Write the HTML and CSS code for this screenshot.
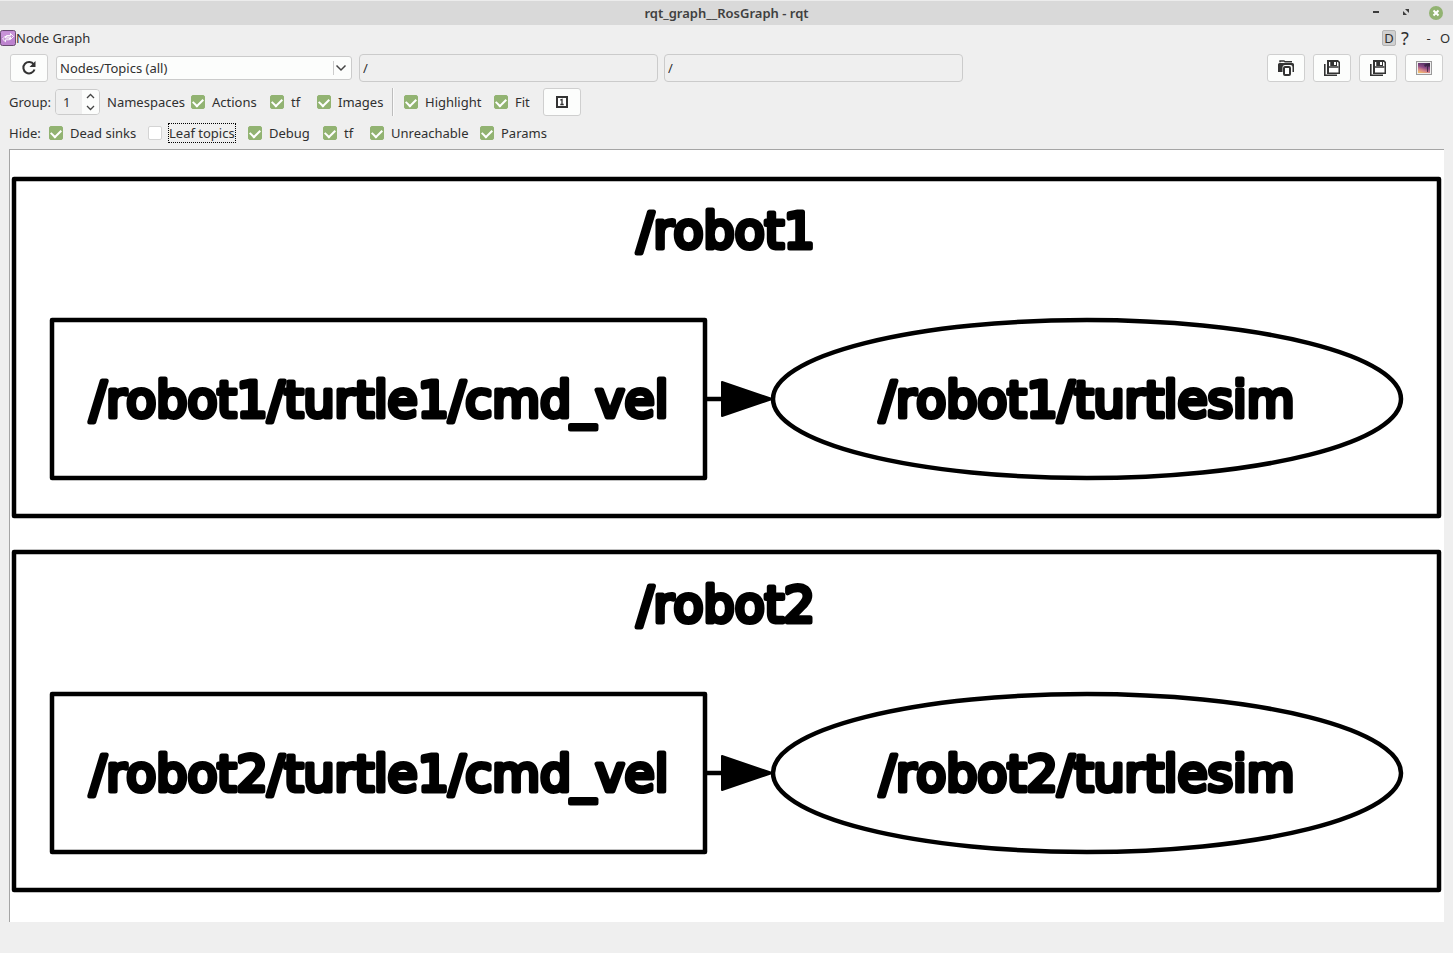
FILE: index.html
```html
<!DOCTYPE html>
<html lang="en">
<head>
<meta charset="utf-8">
<title>rqt_graph__RosGraph - rqt</title>
<link rel="stylesheet" href="styles.css">
</head>
<body>
<header class="titlebar">
  <h1 class="window-title">rqt_graph__RosGraph - rqt</h1>
  <div class="window-buttons">
    <button class="bare" aria-label="Minimize"><svg width="14" height="14" viewBox="0 0 14 14"><path d="M4 6h6" stroke="#3c3c3c" stroke-width="2"/></svg></button>
    <button class="bare" aria-label="Maximize"><svg width="14" height="14" viewBox="0 0 14 14"><path d="M6 3h4v4zM4 5l4 4H4z" fill="#3c3c3c"/></svg></button>
    <button class="bare" aria-label="Close"><svg width="14" height="14" viewBox="0 0 14 14"><circle cx="7" cy="7" r="7" fill="#92b372"/><path d="M4.500 4.500l5 5M9.500 4.500l-5 5" stroke="#fff" stroke-width="2"/></svg></button>
  </div>
</header>

<section class="dock-title">
  <svg width="16" height="16" viewBox="0 0 16 16"><rect x=".5" y=".5" width="15" height="15" rx="2" fill="#bd83cf" stroke="#674a70"/><path d="M1 1.500h14V7H1z" fill="#cf9fdd" opacity=".6"/><path d="M2.500 9l3-3v2h4v1.800h-4v2zM13.500 6.500l-3-3v2h-4v1.500h4v2.500z" fill="#c794d6" stroke="#fff" stroke-width=".9"/></svg>
  <h2 class="dock-name">Node Graph</h2>
  <div class="dock-buttons">
    <button class="bare dock-d">D</button>
    <button class="bare dock-help">?</button>
    <button class="bare dock-min">-</button>
    <button class="bare dock-close">O</button>
  </div>
</section>

<main class="panel">
  <div class="toolbar">
    <button class="tool" aria-label="Refresh"><svg width="16" height="16" viewBox="0 0 16 16"><path d="M12.800 4.500A5.700 5.700 0 1 0 13.500 9.500" fill="none" stroke="#333" stroke-width="2"/><path d="M14.500 1v6h-6z" fill="#333"/></svg></button>
    <div class="combo">
      <select aria-label="Graph type"><option>Nodes/Topics (all)</option></select>
      <svg class="combo-arrow" width="18" height="14" viewBox="0 0 18 14"><path d="M.5 0v14" stroke="#ccc"/><path d="M3.500 4.500l4.500 4.500 4.500-4.500" fill="none" stroke="#444" stroke-width="1.500"/></svg>
    </div>
    <div class="filters">
      <input class="filter" type="text" value="/" aria-label="Namespace filter">
      <input class="filter" type="text" value="/" aria-label="Topic filter">
    </div>
    <div class="tool-group">
      <button class="tool" aria-label="Load DOT"><svg width="16" height="16" viewBox="0 0 16 16"><path d="M2 2.200V1h4l1 .7h7" fill="none" stroke="#333" stroke-width="1.400"/><path d="M0 12V4.500Q0 3 1.500 3h13Q16 3 16 4.500V12h-1.500V7Q14.500 5 12.500 5H7Q4.500 5 4.500 7.500V12z" fill="#333"/><rect x="6" y="7" width="6" height="8" rx="1" fill="#fff" stroke="#333" stroke-width="2"/></svg></button>
      <button class="tool" aria-label="Save as DOT"><svg width="16" height="16" viewBox="0 0 16 16"><use href="#disk"/></svg></button>
      <button class="tool" aria-label="Save as SVG"><svg width="16" height="16" viewBox="0 0 16 16"><g id="disk"><path d="M3 0h11l2 2v12H3z" fill="#333"/><path d="M5 2h1.500v4H13V2h.7l.8.800V12.500H5z" fill="#fff"/><path d="M5 7h9.500" stroke="#333" stroke-width="1.500"/><path d="M6.500 1H13v5H6.500z" fill="#333"/><path d="M10 2h2v3h-2z" fill="#fff"/><path d="M.8 4v11.200H13" fill="none" stroke="#333" stroke-width="1.600"/></g></svg></button>
      <button class="tool" aria-label="Save as image"><svg width="16" height="14" viewBox="0 0 16 14"><defs><linearGradient id="dusk" x1="0" y1="1" x2="0.400" y2="0"><stop offset="0" stop-color="#f5cf62"/><stop offset=".35" stop-color="#d9868a"/><stop offset=".65" stop-color="#8c4a86"/><stop offset="1" stop-color="#5a3468"/></linearGradient></defs><rect x=".5" y=".5" width="15" height="13" fill="#eee" stroke="#999"/><rect x="2" y="2" width="12" height="10" fill="url(#dusk)"/><path d="M8 4l2-1 3-1h1v4l-1-1-1 1v5h-1V5L9 6z" fill="#34203f" opacity=".8"/></svg></button>
    </div>
  </div>

  <div class="options group-options">
    <label for="group">Group:</label>
    <div class="spin">
      <input id="group" type="text" value="1">
      <div class="spin-buttons">
        <button class="bare" aria-label="Increase"><svg width="9" height="6" viewBox="0 0 9 6"><path d="M1 5l3.500-3.500L8 5" fill="none" stroke="#444" stroke-width="1.300"/></svg></button>
        <button class="bare" aria-label="Decrease"><svg width="9" height="6" viewBox="0 0 9 6"><path d="M1 1l3.500 3.500L8 1" fill="none" stroke="#444" stroke-width="1.300"/></svg></button>
      </div>
    </div>
    <span>Namespaces</span>
    <label class="check"><input type="checkbox" checked><span>Actions</span></label>
    <label class="check"><input type="checkbox" checked><span>tf</span></label>
    <label class="check"><input type="checkbox" checked><span>Images</span></label>
    <i class="divider"></i>
    <label class="check"><input type="checkbox" checked><span>Highlight</span></label>
    <label class="check"><input type="checkbox" checked><span>Fit</span></label>
    <button class="tool" aria-label="Fit in view"><svg width="12" height="12" viewBox="0 0 12 12"><rect x="1" y="1" width="10" height="10" fill="#fff" stroke="#333" stroke-width="2"/><path d="M4.300 4.200L6 3.500V9M4.300 8.500h3.400" fill="none" stroke="#333" stroke-width="1.300"/></svg></button>
  </div>

  <div class="options hide-options">
    <span>Hide:</span>
    <label class="check"><input type="checkbox" checked><span>Dead sinks</span></label>
    <label class="check"><input type="checkbox"><span class="focused">Leaf topics</span></label>
    <label class="check"><input type="checkbox" checked><span>Debug</span></label>
    <label class="check"><input type="checkbox" checked><span>tf</span></label>
    <label class="check"><input type="checkbox" checked><span>Unreachable</span></label>
    <label class="check"><input type="checkbox" checked><span>Params</span></label>
  </div>

  <div class="view">
    <svg class="graph" viewBox="0 0 1434 772" role="img" aria-label="Node graph">
      <g class="cluster">
        <rect x="4" y="29" width="1425" height="337"/>
        <text x="716" y="98">/robot1</text>
        <rect x="42" y="170" width="653" height="158"/>
        <text x="369" y="267">/robot1/turtle1/cmd_vel</text>
        <path d="M696 249h16"/>
        <path class="arrow" d="M712 232l50 17-50 17z"/>
        <ellipse cx="1077" cy="249" rx="314" ry="79"/>
        <text x="1077" y="267">/robot1/turtlesim</text>
      </g>
      <g class="cluster">
        <rect x="4" y="402" width="1425" height="338"/>
        <text x="716" y="472">/robot2</text>
        <rect x="42" y="544" width="653" height="158"/>
        <text x="369" y="641">/robot2/turtle1/cmd_vel</text>
        <path d="M696 623h16"/>
        <path class="arrow" d="M712 606l50 17-50 17z"/>
        <ellipse cx="1077" cy="623" rx="314" ry="79"/>
        <text x="1077" y="641">/robot2/turtlesim</text>
      </g>
    </svg>
  </div>
</main>
</body>
</html>
```
FILE: styles.css
```css
* {
  box-sizing: border-box;
}

body {
  margin: 0;
  min-height: 100vh;
  display: flex;
  flex-direction: column;
  background: #efefef;
  color: #303030;
  font: 13px/18px "Noto Sans", sans-serif;
}

button,
input,
select {
  font: inherit;
  color: inherit;
}

svg {
  display: block;
}

.bare {
  border: 0;
  padding: 0;
  background: none;
}

.titlebar {
  display: grid;
  grid-template-columns: 1fr auto 1fr;
  align-items: center;
  height: 25px;
  padding: 0 10px;
  background: #d9d9d9;
  border-top: 1px solid #ececec;
}

.window-title {
  grid-column: 2;
  margin: 0;
  font-size: 13px;
  font-weight: 600;
  color: #404040;
}

.window-buttons {
  display: flex;
  justify-content: flex-end;
  gap: 16px;
}

.dock-title {
  display: flex;
  align-items: center;
  height: 26px;
}

.dock-name {
  margin: 0;
  font-size: 13px;
  font-weight: 400;
}

.dock-buttons {
  display: flex;
  align-items: center;
  margin-left: auto;
  padding-right: 3px;
}

.dock-d {
  width: 14px;
  height: 16px;
  border: 1px solid #b4b4b4;
  border-radius: 2px;
  background: #d0d0d0;
  line-height: 14px;
}

.dock-help {
  width: 18px;
  font-size: 18px;
}

.dock-min {
  width: 26px;
  padding-left: 3px;
}

.dock-close {
  width: 10px;
}

.panel {
  flex: 1;
  display: flex;
  flex-direction: column;
  padding: 3px 9px 31px;
}

.toolbar {
  display: flex;
  align-items: center;
  gap: 8px;
  padding: 0 1px;
}

.tool {
  display: flex;
  align-items: center;
  justify-content: center;
  width: 38px;
  height: 28px;
  padding: 0;
  border: 1px solid #cfcfcf;
  border-radius: 3px;
  background: #fcfdfc;
}

.combo {
  position: relative;
  width: 296px;
}

.combo select {
  display: block;
  width: 100%;
  height: 24px;
  padding: 0 3px;
  border: 1px solid #cbcbcb;
  border-radius: 3px;
  background: #fcfdfc;
  appearance: none;
}

.combo-arrow {
  position: absolute;
  top: 5px;
  right: 1px;
  pointer-events: none;
}

.filters {
  display: flex;
  gap: 6px;
  margin-left: -1px;
}

.filter {
  width: 299px;
  height: 28px;
  padding: 0 3px;
  border: 1px solid #cbcbcb;
  border-radius: 4px;
  background: #efefef;
}

.tool-group {
  display: flex;
  gap: 8px;
  margin-left: auto;
}

.options {
  display: grid;
  align-items: center;
}

.group-options {
  grid-template-columns: 46px 52px 84px 79px 47px 75px 12px 90px 49px auto;
  height: 28px;
  margin-top: 6px;
}

.hide-options {
  grid-template-columns: 40px 99px 100px 75px 47px 110px auto;
  height: 20px;
  margin: 7px 0 6px;
}

.spin {
  display: flex;
  width: 45px;
  height: 26px;
  border: 1px solid #cbcbcb;
  border-radius: 4px;
  overflow: hidden;
}

.spin input {
  width: 26px;
  padding: 0 0 0 7px;
  border: 0;
  background: #efefef;
}

.spin-buttons {
  flex: 1;
  display: grid;
  grid-template-rows: 1fr 1fr;
  background: #fcfdfc;
}

.spin-buttons button {
  display: grid;
  place-items: center;
}

.check {
  display: flex;
  align-items: center;
  gap: 7px;
  white-space: nowrap;
}

.check input {
  appearance: none;
  display: grid;
  place-items: center;
  width: 14px;
  height: 14px;
  margin: 0;
  border: 1px solid #d4d4d4;
  border-radius: 2px;
  background: #fff;
}

.check input:checked {
  border-color: #92b372;
  background: #92b372;
}

.check input:checked::before {
  content: "";
  width: 8px;
  height: 5px;
  margin-bottom: 2px;
  border: solid #fff;
  border-width: 0 0 2px 2px;
  rotate: -45deg;
}

.focused {
  outline: 1px dotted #000;
}

.divider {
  width: 2px;
  height: 28px;
  border-left: 1px solid #bdbdbd;
  border-right: 1px solid #fafafa;
}

.view {
  flex: 1;
  display: flex;
  border-top: 1px solid #a5a5a5;
  border-left: 1px solid #a5a5a5;
  background: #fff;
}

.graph {
  width: 100%;
}

.cluster {
  fill: none;
  stroke: #000;
  stroke-width: 4.500px;
  stroke-linejoin: round;
}

.cluster text {
  fill: #000;
  stroke-width: 5px;
  font: 49px "DejaVu Sans", sans-serif;
  font-kerning: none;
  text-anchor: middle;
}

.arrow {
  fill: #000;
  stroke-width: 2px;
}
```
